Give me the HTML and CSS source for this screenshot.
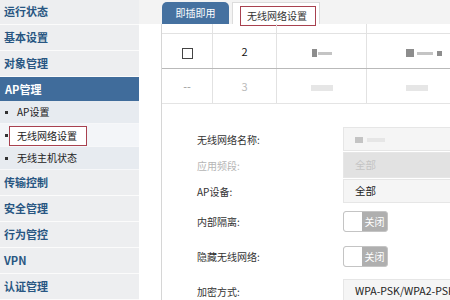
FILE: index.html
```html
<!DOCTYPE html>
<html lang="zh-CN">
<head>
  <meta charset="UTF-8" />
  <meta name="viewport" content="width=device-width, initial-scale=1.0" />
  <title>AP管理 - 无线网络设置</title>
  <link rel="stylesheet" href="styles.css">
</head>
<body>
  <div class="page">
    <div class="sidebar">
      <div class="menu-item first">运行状态</div>
      <div class="menu-item">基本设置</div>
      <div class="menu-item">对象管理</div>
      <div class="menu-item active">AP管理</div>
      <div class="sub-item">AP设置</div>
      <div class="sub-item current"><span class="mark">无线网络设置</span></div>
      <div class="sub-item">无线主机状态</div>
      <div class="menu-item">传输控制</div>
      <div class="menu-item">安全管理</div>
      <div class="menu-item">行为管控</div>
      <div class="menu-item">VPN</div>
      <div class="menu-item">认证管理</div>
    </div>

    <div class="main">
      <div class="tabbar">
        <div class="tab tab-blue">即插即用</div>
        <div class="tab tab-white"><span class="mark">无线网络设置</span></div>
      </div>

      <div class="content">
        <table class="list">
          <thead>
            <tr>
              <th class="c1"></th>
              <th class="c2"></th>
              <th class="c3"></th>
              <th class="c4"></th>
            </tr>
          </thead>
          <tbody>
            <tr class="row-on">
              <td><span class="checkbox"></span></td>
              <td>2</td>
              <td><span class="blur b-dark b1"></span><span class="blur b-mid b2"></span></td>
              <td class="left"><span class="blur b-dark b3"></span><span class="blur b-mid b4"></span><span class="blur b-dark b5"></span></td>
            </tr>
            <tr class="row-off">
              <td>--</td>
              <td>3</td>
              <td><span class="blur b-light b6"></span></td>
              <td class="left"><span class="blur b-light b7"></span></td>
            </tr>
          </tbody>
        </table>

        <div class="form">
          <div class="form-row">
            <div class="label">无线网络名称:</div>
            <div class="field"><span class="blur b-mid b8"></span><span class="blur b-light b9"></span></div>
          </div>
          <div class="form-row">
            <div class="label disabled">应用频段:</div>
            <div class="field field-disabled">全部</div>
          </div>
          <div class="form-row">
            <div class="label">AP设备:</div>
            <div class="field">全部</div>
          </div>
          <div class="form-row tall">
            <div class="label">内部隔离:</div>
            <div class="switch"><span class="knob"></span><span class="state">关闭</span></div>
          </div>
          <div class="form-row tall">
            <div class="label">隐藏无线网络:</div>
            <div class="switch"><span class="knob"></span><span class="state">关闭</span></div>
          </div>
          <div class="form-row last">
            <div class="label">加密方式:</div>
            <div class="field">WPA-PSK/WPA2-PSK</div>
          </div>
        </div>
      </div>
    </div>
  </div>
</body>
</html>
```

FILE: styles.css
```css
body {
  margin: 0;
  padding: 0;
  font-family: "Noto Sans CJK SC", "Liberation Sans", sans-serif;
  background-color: #fff;
  overflow: hidden;
}

.page {
  display: flex;
  width: 450px;
  height: 300px;
  overflow: hidden;
}

/* menu */
.sidebar {
  width: 139px;
  flex-shrink: 0;
  background-color: #edeef0;
}

.menu-item {
  height: 25px;
  line-height: 25px;
  padding-left: 4px;
  font-size: 11px;
  font-weight: bold;
  color: #285682;
  border-bottom: 1px solid #fbfbfb;
  box-sizing: content-box;
}

.menu-item.first {
  margin-top: -1px;
}

.menu-item.active {
  height: 24px;
  line-height: 24px;
  padding-left: 5px;
  background-color: #406c9b;
  color: #fff;
  border-bottom: none;
}

.sub-item {
  height: 22px;
  line-height: 22px;
  padding-left: 17px;
  font-size: 10px;
  color: #222;
  background-color: #e7ebf0;
  border-bottom: 1px solid #f6f7f9;
  position: relative;
}

.sub-item::before {
  content: "";
  position: absolute;
  left: 5px;
  top: 10px;
  width: 3px;
  height: 3px;
  background-color: #333;
}

.sub-item.current {
  display: flex;
  align-items: flex-end;
  background-color: #f3f5f8;
  padding-left: 9px;
}

.mark {
  display: inline-block;
  border: 1px solid #a8414f;
  line-height: 18px;
  padding: 0 9px 0 7px;
  background-color: #fff;
}

/* right side */
.main {
  flex: 1;
  display: flex;
  flex-direction: column;
  min-width: 0;
}

.tabbar {
  height: 24px;
  flex-shrink: 0;
  display: flex;
  align-items: flex-end;
  padding-left: 23px;
  background-color: #f3f3f3;
}

.tab {
  height: 22px;
  font-size: 10px;
  box-sizing: border-box;
}

.tab-blue {
  width: 67px;
  line-height: 22px;
  text-align: center;
  color: #fff;
  background-color: #4571a0;
  border-radius: 5px 5px 0 0;
}

.tab-white {
  width: 88px;
  margin-left: 3px;
  padding: 3px 0 0 7px;
  background-color: #fff;
  border: 1px solid #dcdcdc;
  border-bottom: none;
  color: #333;
}

.tab-white .mark {
  padding: 0 8px 0 6px;
}

.content {
  flex: 1;
  margin-left: 22px;
  border-left: 1px solid #d6d6d6;
}

/* table */
table.list {
  border-collapse: collapse;
  table-layout: fixed;
  width: 340px;
}

.list th {
  height: 9px;
  padding: 0;
  border-bottom: 1px solid #e2e2e2;
  border-right: 1px solid #e2e2e2;
}

.list .c1 { width: 50px; }
.list .c2 { width: 63px; }
.list .c3 { width: 89px; }

.list td {
  height: 34px;
  padding: 0;
  text-align: center;
  font-size: 11px;
  border-right: 1px solid #e2e2e2;
}

.list td.left {
  text-align: left;
  padding-left: 39px;
}

.row-on td {
  color: #111;
  border-bottom: 1px solid #b9b9b9;
}

.row-off td {
  color: #bbb;
  border-bottom: 1px solid #e4e4e4;
}

.row-off td:first-child {
  color: #999;
}

.checkbox {
  display: inline-block;
  width: 9px;
  height: 9px;
  border: 1px solid #444;
  vertical-align: middle;
}

/* pixelated, hidden values */
.blur {
  display: inline-block;
  vertical-align: middle;
  filter: blur(0.6px);
}

.b-dark { background-color: #8d8d8d; }
.b-mid { background-color: #c4c4c4; }
.b-light { background-color: #e6e6e6; }

.b1 { width: 5px; height: 8px; }
.b2 { width: 14px; height: 3px; margin-left: 1px; }
.b3 { width: 8px; height: 8px; }
.b4 { width: 16px; height: 3px; margin-left: 3px; }
.b5 { width: 5px; height: 5px; margin-left: 4px; }
.b6 { width: 22px; height: 6px; }
.b7 { width: 22px; height: 6px; }
.b8 { width: 8px; height: 6px; }
.b9 { width: 18px; height: 4px; margin-left: 4px; }

/* form */
.form {
  padding: 22px 0 0 35px;
}

.form-row {
  display: flex;
  align-items: center;
  height: 26px;
}

.form-row.tall {
  height: 35px;
}

.form-row.last {
  margin-top: 4px;
}

.label {
  width: 146px;
  flex-shrink: 0;
  font-size: 10px;
  color: #333;
}

.label.disabled {
  color: #b5b5b5;
}

.field {
  width: 150px;
  height: 24px;
  line-height: 22px;
  box-sizing: border-box;
  padding-left: 11px;
  flex-shrink: 0;
  font-size: 10.5px;
  color: #222;
  background-color: #f5f5f5;
  border: 1px solid #e6e6e6;
  white-space: nowrap;
}

.field-disabled {
  background-color: #e2e2e2;
  color: #c4c4c4;
  height: 26px;
  line-height: 24px;
}

.switch {
  display: flex;
  width: 45px;
  height: 21px;
  box-sizing: border-box;
  border: 1px solid #c4c4c4;
  border-radius: 3px;
  overflow: hidden;
  background-color: #afafaf;
}

.knob {
  width: 18px;
  background-color: #fff;
}

.state {
  flex: 1;
  line-height: 19px;
  text-align: center;
  font-size: 10px;
  color: #fff;
}
```
